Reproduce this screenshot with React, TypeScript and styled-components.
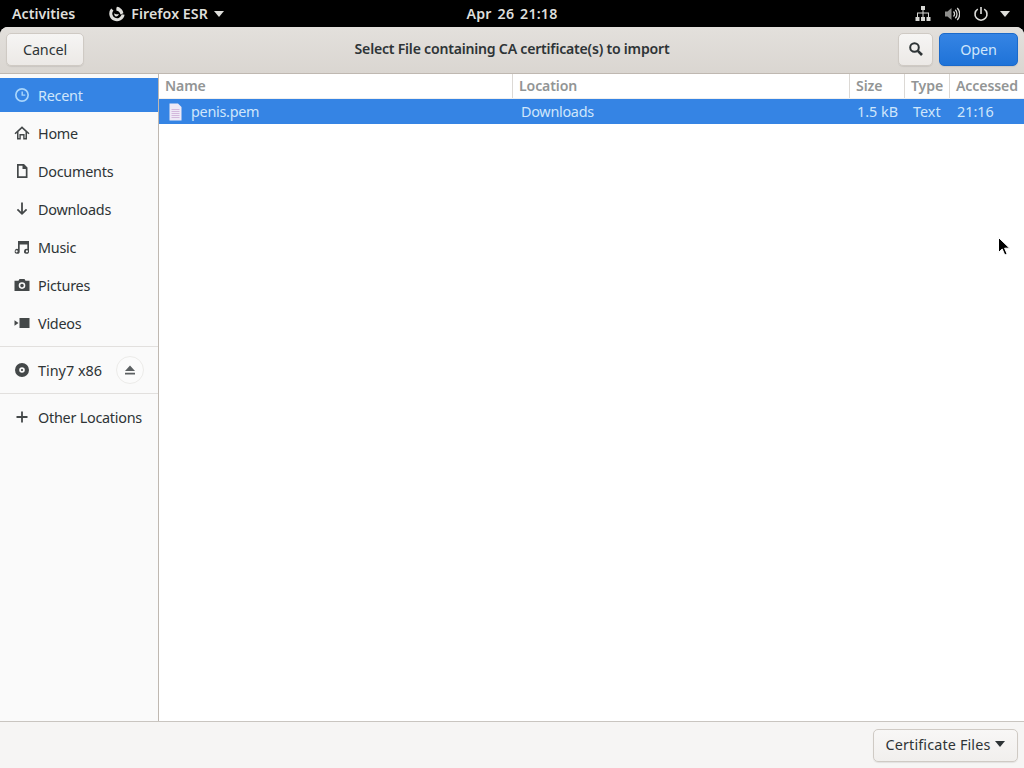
import React from "react";
import styled, { createGlobalStyle } from "styled-components";

const Global = createGlobalStyle`
  html, body { margin: 0; padding: 0; background: #000; }
  body { font-family: "Noto Sans", "Open Sans", sans-serif; font-size: 14.4px; color: #2e3436; }
  * { box-sizing: border-box; }
`;

const Page = styled.div`
  position: relative;
  width: 1024px;
  height: 768px;
  display: flex;
  flex-direction: column;
  overflow: hidden;
  background: #000;
`;

const TopBar = styled.div`
  height: 27px;
  flex: none;
  display: grid;
  grid-template-columns: 1fr auto 1fr;
  align-items: center;
  background: #000;
  color: #dededb;
  font-weight: 600;
  font-size: 14.2px;
  padding: 0 12px;
`;

const TopLeft = styled.div`
  display: flex;
  align-items: center;
  gap: 34px;
`;

const AppMenu = styled.div`
  display: flex;
  align-items: center;
  gap: 6px;
  letter-spacing: 0.05px;
`;

const TopRight = styled.div`
  display: flex;
  align-items: center;
  justify-content: flex-end;
  gap: 13px;
  padding-right: 2px;
`;

const MenuCaret = styled.span`
  margin-left: -2px;
  display: inline-flex;
`;

const Clock = styled.div`
  word-spacing: 2px;
  letter-spacing: 0.2px;
`;

const Caret = styled.span<{ $color?: string }>`
  display: inline-block;
  width: 0;
  height: 0;
  border-left: 5.5px solid transparent;
  border-right: 5.5px solid transparent;
  border-top: 6px solid ${(p) => p.$color || "#dededb"};
`;

const Window = styled.div`
  flex: 1;
  display: flex;
  flex-direction: column;
  min-height: 0;
  border-radius: 8px 8px 0 0;
  overflow: hidden;
  background: #fff;
`;

const Header = styled.div`
  height: 47px;
  flex: none;
  display: grid;
  grid-template-columns: 1fr auto 1fr;
  align-items: center;
  padding: 0 6px 2px 6px;
  background: linear-gradient(#e3e0dc, #dad6d1);
  border-bottom: 1px solid #bfb8b1;
`;

const HeaderEnd = styled.div`
  display: flex;
  justify-content: flex-end;
  gap: 6px;
`;

const Title = styled.div`
  font-weight: 600;
  font-size: 14.1px;
  letter-spacing: -0.22px;
  padding-bottom: 1px;
  color: #2e3436;
`;

const Button = styled.button<{ $primary?: boolean; $w: number }>`
  width: ${(p) => p.$w}px;
  height: 33px;
  padding: 0;
  display: inline-flex;
  align-items: center;
  justify-content: center;
  border-radius: 5px;
  font: inherit;
  font-size: 14.4px;
  letter-spacing: -0.1px;
  color: ${(p) => (p.$primary ? "#cfe6fb" : "#2e3436")};
  border: 1px solid ${(p) => (p.$primary ? "#1b6acb" : "#cfcac4")};
  background: ${(p) => (p.$primary ? "linear-gradient(#3584e4, #1f73d8)" : "linear-gradient(#f6f5f4, #ece9e6)")};
  box-shadow: 0 1px 1px rgba(0, 0, 0, 0.08);
`;

const Body = styled.div`
  flex: 1;
  display: flex;
  min-height: 0;
`;

const Sidebar = styled.nav`
  width: 159px;
  flex: none;
  padding-top: 4px;
  background: #fafafa;
  border-right: 1px solid #bfb8b1;
`;

const Place = styled.div<{ $active?: boolean }>`
  height: 34px;
  margin-bottom: 4px;
  display: flex;
  align-items: center;
  gap: 8px;
  padding-left: 14px;
  letter-spacing: -0.25px;
  color: ${(p) => (p.$active ? "#cfe6fb" : "#2e3436")};
  background: ${(p) => (p.$active ? "#3584e4" : "transparent")};
`;

const Sep = styled.div`
  height: 1px;
  background: #e2e0de;
  margin: 6px 0 6px;
`;

const PlaceIcon = styled.svg<{ $active?: boolean }>`
  width: 16px;
  height: 16px;
  flex: none;
  fill: ${(p) => (p.$active ? "#a8d5fb" : "#444849")};
`;

const PlaceLabel = styled.span<{ $wide?: boolean }>`
  letter-spacing: ${(p) => (p.$wide ? "0" : "inherit")};
`;

const EjectCircle = styled.div`
  margin-left: auto;
  margin-right: 14px;
  width: 28px;
  height: 28px;
  border-radius: 50%;
  border: 1px solid #ecebe9;
  background: #fbfbfb;
  display: flex;
  align-items: center;
  justify-content: center;
`;

const Main = styled.main`
  flex: 1;
  min-width: 0;
  background: #fff;
`;

const Columns = "354px 337px 55px 45px 1fr";

const HeadRow = styled.div`
  height: 25px;
  display: grid;
  grid-template-columns: ${Columns};
  border-bottom: 1px solid #f0efee;
`;

const HeadCell = styled.div`
  padding: 0 0 2px 6px;
  display: flex;
  align-items: center;
  font-weight: 600;
  font-size: 14.1px;
  letter-spacing: -0.12px;
  color: #929595;
  border-right: 1px solid #dcd9d5;
  &:last-child {
    border-right: none;
  }
`;

const FileRow = styled.div`
  height: 25px;
  display: grid;
  grid-template-columns: ${Columns};
  align-items: center;
  background: #3584e4;
  color: #cfe6fb;
`;

const FileCell = styled.div<{ $pad?: number; $tight?: boolean }>`
  padding-left: ${(p) => p.$pad ?? 8}px;
  display: flex;
  align-items: center;
  gap: 8px;
  white-space: nowrap;
  letter-spacing: ${(p) => (p.$tight ? "-0.28px" : "0")};
`;

const FileIcon = styled.svg`
  width: 15px;
  height: 18px;
  margin-left: 1px;
  flex: none;
`;

const Footer = styled.div`
  height: 47px;
  flex: none;
  display: flex;
  align-items: center;
  justify-content: flex-end;
  padding: 0 6px;
  background: #f6f5f4;
  border-top: 1px solid #c9c5c0;
`;

const FilterButton = styled.button`
  width: 145px;
  height: 33px;
  padding: 0 0 2px;
  display: inline-flex;
  align-items: center;
  justify-content: center;
  gap: 5px;
  font: inherit;
  letter-spacing: 0.13px;
  color: #2e3436;
  border: 1px solid #cfcac4;
  border-radius: 5px;
  background: linear-gradient(#f8f7f6, #f1efed);
  box-shadow: 0 1px 1px rgba(0, 0, 0, 0.08);
`;

const Cursor = styled.svg`
  position: absolute;
  left: 997px;
  top: 236px;
  width: 14px;
  height: 22px;
`;

const icons: Record<string, React.ReactNode> = {
  recent: <path fillRule="evenodd" d="M8 1a7 7 0 1 0 0 14A7 7 0 0 0 8 1zm0 1.700a5.300 5.300 0 1 1 0 10.600A5.300 5.300 0 0 1 8 2.700zM7.500 4.500v4.200h3.800V7.400H8.900V4.500z" />,
  home: <path fillRule="evenodd" d="M8 1.200.5 8.300l1 1L3 7.900V14.500h3.800v-4h2.400v4H13V7.900l1.500 1.400 1-1zM8 3.500l3.500 3.300v6.200h-.9V9H5.400v4h-.9V6.800z" />,
  doc: <path fillRule="evenodd" d="M3 1h7l3.500 3.500V15H3zM4.700 2.700v10.600h7.100V6H8.500V2.700z" />,
  down: <path d="M7.100 1.500h1.800v9.300l3.100-3.100 1.200 1.200L8 14.100 2.800 8.900 4 7.700l3.100 3.100z" />,
  music: <path fillRule="evenodd" d="M4 2h11v10.200a2.500 2.500 0 1 1-1.700-2.300V5.500H5.700v6.700A2.500 2.500 0 1 1 4 9.900zM2.600 11.200a1.100 1.100 0 1 0 0 2.200 1.100 1.100 0 0 0 0-2.200zm10.300 0a1.100 1.100 0 1 0 0 2.200 1.100 1.100 0 0 0 0-2.200z" />,
  camera: <path fillRule="evenodd" d="M5.500 2h5l1 1.800H15.500V14H.5V3.800h4zM8 5.300a3.300 3.300 0 1 0 0 6.600 3.300 3.300 0 0 0 0-6.600zm0 1.500a1.800 1.800 0 1 1 0 3.600 1.800 1.800 0 0 1 0-3.600z" />,
  video: <path d="M5.500 3H15.500V13H5.500zM.5 5.300 4.500 8l-4 2.700z" />,
  disc: <path fillRule="evenodd" d="M8 1a7 7 0 1 0 0 14A7 7 0 0 0 8 1zm0 4.200a2.800 2.800 0 1 1 0 5.600 2.800 2.800 0 0 1 0-5.600zM8 6.900a1.100 1.100 0 1 0 0 2.200 1.100 1.100 0 0 0 0-2.200z" />,
  plus: <path d="M7.100 2.500h1.800v4.600h4.600v1.800H8.900V13.500H7.100V8.900H2.500V7.100h4.600z" />,
};

const places = [
  { key: "recent", label: "Recent", active: true },
  { key: "home", label: "Home" },
  { key: "doc", label: "Documents" },
  { key: "down", label: "Downloads" },
  { key: "music", label: "Music" },
  { key: "camera", label: "Pictures" },
  { key: "video", label: "Videos" },
];

const PlaceRow = ({ k, label, active, wide, children }: { k: string; label: string; active?: boolean; wide?: boolean; children?: React.ReactNode }) => (
  <Place $active={active}>
    <PlaceIcon viewBox="0 0 16 16" $active={active}>{icons[k]}</PlaceIcon>
    <PlaceLabel $wide={wide}>{label}</PlaceLabel>
    {children}
  </Place>
);

export default function App() {
  return (
    <Page>
      <Global />
      <TopBar>
        <TopLeft>
          <span>Activities</span>
          <AppMenu>
            <svg width="16" height="16" viewBox="0 0 16 16">
              <path d="M3.300 3.500A6.200 6.200 0 1 0 14.100 8.500" fill="none" stroke="#dededb" strokeWidth="3" />
              <path d="M8 .8c2.800.3 5.700 2.600 6.400 6.400l-3 1.300C11 6.400 9.800 5 7.500 4.800 7.200 3.200 7.300 1.900 8 .8z" fill="#dededb" />
              <path d="M5.200 7.300c1 1.100 2.800 1.200 4.600.8-.2 1.500-1.500 2.500-3 2.300-1.100-.2-1.800-1.700-1.600-3.100z" fill="#dededb" />
            </svg>
            <span>Firefox ESR</span>
            <Caret />
          </AppMenu>
        </TopLeft>
        <Clock>Apr 26 21:18</Clock>
        <TopRight>
          <svg width="16" height="16" viewBox="0 0 16 16" fill="#d6d6d3">
            <path d="M6 0h4v4H8.500v2.500H14V11h-1V7.500H8.500V11h-1V7.500H3V11H2V6.500h5.500V4H6z" />
            <path d="M0.500 11h4v4h-4zM6 11h4v4H6zM11.500 11h4v4h-4z" />
          </svg>
          <svg width="16" height="16" viewBox="0 0 16 16" fill="none" stroke="#d6d6d3" strokeWidth="1.300">
            <path d="M1 5.500h2.500L7.500 2v12l-4-3.500H1z" fill="#8e8e8c" stroke="none" />
            <path d="M9.500 5.500a3.500 3.500 0 0 1 0 5M11.300 3.800a6 6 0 0 1 0 8.400M13.200 2a8.500 8.500 0 0 1 0 12" />
          </svg>
          <svg width="16" height="16" viewBox="0 0 16 16" fill="none" stroke="#dededb" strokeWidth="1.600">
            <path d="M4.800 3.100a6 6 0 1 0 6.400 0M8 1v7" />
          </svg>
          <MenuCaret>
            <Caret />
          </MenuCaret>
        </TopRight>
      </TopBar>
      <Window>
        <Header>
          <div>
            <Button $w={78}>Cancel</Button>
          </div>
          <Title>Select File containing CA certificate(s) to import</Title>
          <HeaderEnd>
            <Button $w={35}>
              <svg width="16" height="16" viewBox="0 0 16 16" fill="none" stroke="#2e3436">
                <circle cx="6.500" cy="6.500" r="4.300" strokeWidth="2" />
                <path d="M9.800 9.800 14 14" strokeWidth="2.600" />
              </svg>
            </Button>
            <Button $w={79} $primary>Open</Button>
          </HeaderEnd>
        </Header>
        <Body>
          <Sidebar>
            {places.map((p) => (
              <PlaceRow key={p.key} k={p.key} label={p.label} active={p.active} />
            ))}
            <Sep />
            <PlaceRow k="disc" label="Tiny7 x86" wide>
              <EjectCircle>
                <svg width="14" height="14" viewBox="0 0 14 14" fill="#5c6062">
                  <path d="M7 2.500 12 8H2zM2 9.800h10V11.500H2z" />
                </svg>
              </EjectCircle>
            </PlaceRow>
            <Sep />
            <PlaceRow k="plus" label="Other Locations" />
          </Sidebar>
          <Main>
            <HeadRow>
              <HeadCell>Name</HeadCell>
              <HeadCell>Location</HeadCell>
              <HeadCell>Size</HeadCell>
              <HeadCell>Type</HeadCell>
              <HeadCell>Accessed</HeadCell>
            </HeadRow>
            <FileRow>
              <FileCell $tight>
                <FileIcon viewBox="0 0 15 18">
                  <path d="M1.500 .5h8.500L13.500 4v13.500h-12z" fill="#eee9f6" />
                  <path d="M3.500 6.500h8M3.500 8.500h8M3.500 10.500h8M3.500 12.500h8M3.500 14.500h8" stroke="#d3b8dc" strokeWidth="1" />
                </FileIcon>
                <span>penis.pem</span>
              </FileCell>
              <FileCell $tight>Downloads</FileCell>
              <FileCell $pad={7}>1.5 kB</FileCell>
              <FileCell $pad={8}>Text</FileCell>
              <FileCell $pad={7}>21:16</FileCell>
            </FileRow>
          </Main>
        </Body>
        <Footer>
          <FilterButton>
            <span>Certificate Files</span>
            <Caret $color="#2e3436" />
          </FilterButton>
        </Footer>
      </Window>
      <Cursor viewBox="0 0 14 22">
        <path d="M1.500 1.500v15l3.700-3.500 2.600 6 2.300-1-2.500-5.800h5z" fill="#000" stroke="#fff" strokeWidth="1" />
      </Cursor>
    </Page>
  );
}
